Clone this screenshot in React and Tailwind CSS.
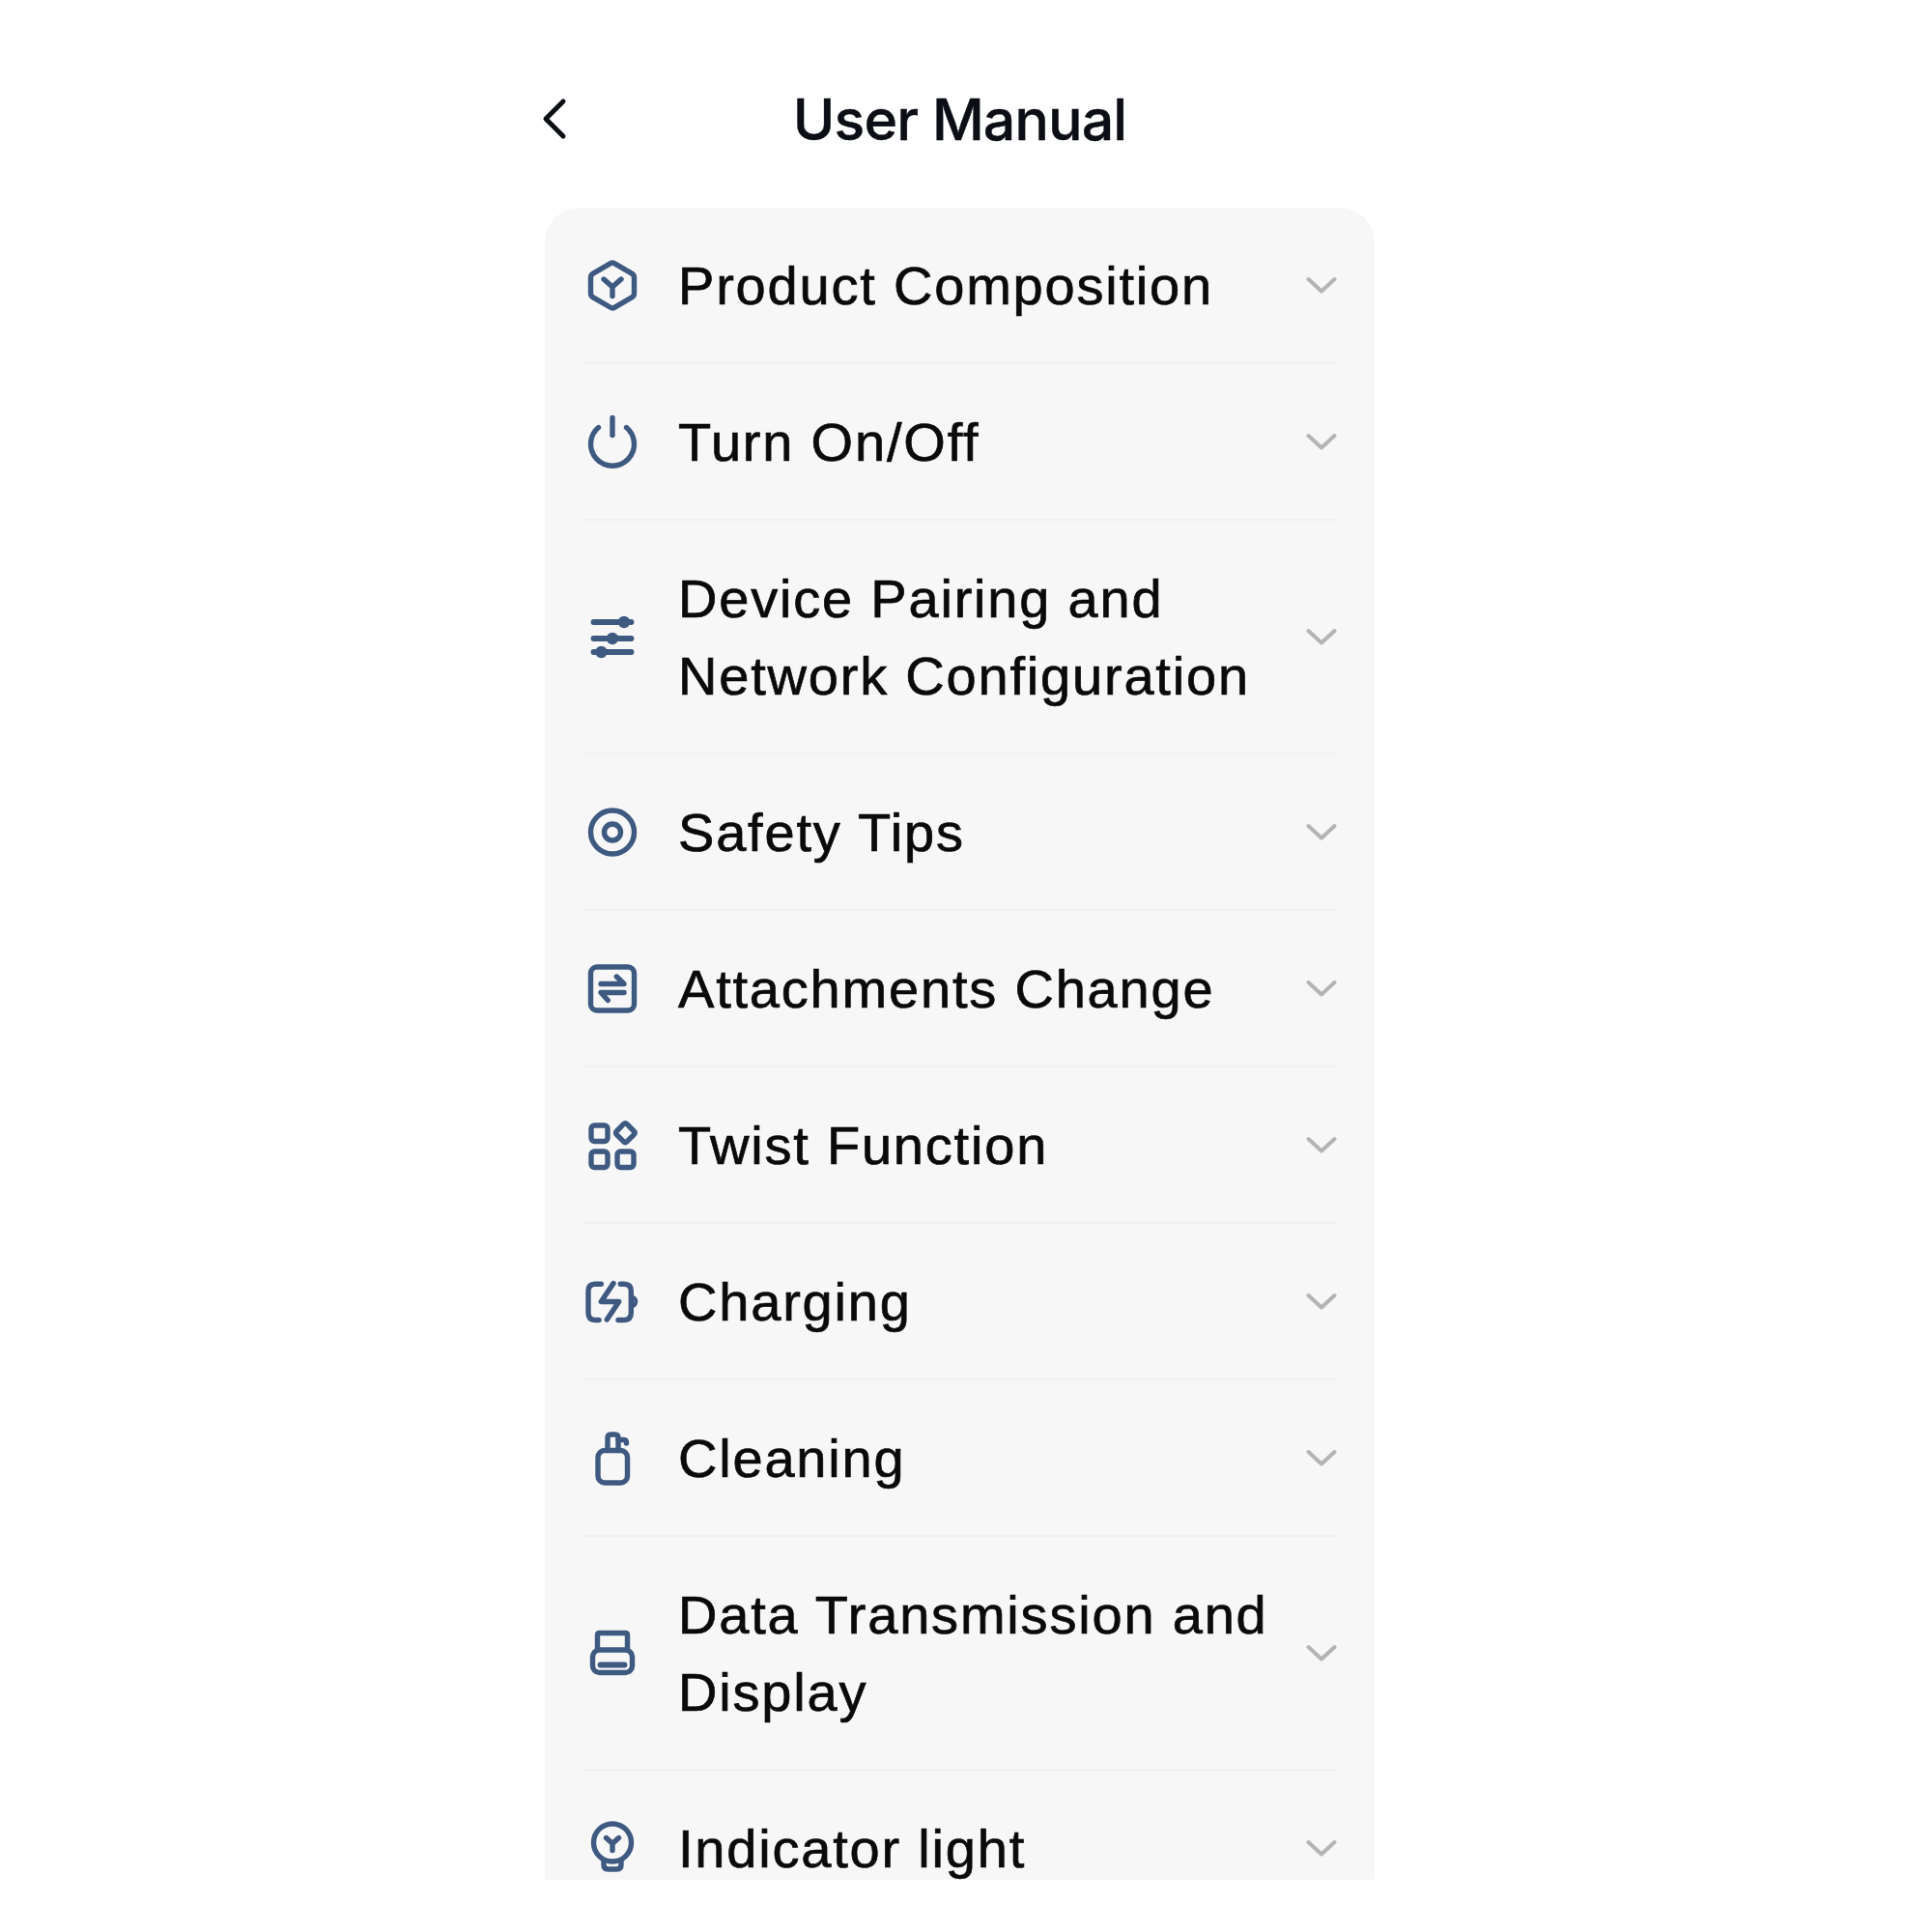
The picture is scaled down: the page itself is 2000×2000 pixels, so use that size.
const Icon = ({ children }) => (
  <svg
    className="w-[62px] h-[62px] shrink-0 text-[#3e5a81]"
    viewBox="-31 -30.5 62 62"
    fill="none"
    stroke="currentColor"
    strokeWidth="5.4"
    strokeLinecap="round"
    strokeLinejoin="round"
  >
    {children}
  </svg>
);

const icons = {
  hex: (
    <>
      <path d="M2 -22.8 L20 -12.4 Q22.5 -11 22.5 -8 V8 Q22.5 11 20 12.4 L2 22.8 Q0 24 -2 22.8 L-20 12.4 Q-22.5 11 -22.5 8 V-8 Q-22.5 -11 -20 -12.4 L-2 -22.8 Q0 -24 2 -22.8 Z" />
      <path d="M-9 -6.5 L0 1.5 L9 -6.5 M0 1.5 V11" />
    </>
  ),
  power: (
    <>
      <path d="M14.5 -15 A22.5 22.5 0 1 1 -14.5 -15" />
      <path d="M0 -25 V-7" />
    </>
  ),
  sliders: (
    <>
      <path d="M-19.5 -15.5 H19.5 M-19.5 1.5 H19.5 M-19.5 15.5 H19.5" strokeWidth="5.8" />
      <circle cx="12" cy="-15.5" r="6.2" fill="currentColor" stroke="none" />
      <circle cx="0" cy="1.5" r="6.2" fill="currentColor" stroke="none" />
      <circle cx="-11.5" cy="15.5" r="6.2" fill="currentColor" stroke="none" />
    </>
  ),
  target: (
    <>
      <circle cx="0" cy="0" r="22.5" />
      <circle cx="0" cy="0" r="8.5" />
    </>
  ),
  swap: (
    <>
      <rect x="-22.5" y="-22.5" width="45" height="45" rx="6.5" />
      <path d="M-12 -5 H12 L4.3 -12.5 M12 4 H-12 L-4.7 12" />
    </>
  ),
  apps: (
    <>
      <rect x="-22" y="-20.5" width="17" height="16.5" rx="3.5" />
      <rect x="-22" y="6.5" width="17" height="16.5" rx="3.5" />
      <rect x="5" y="6.5" width="17" height="16.5" rx="3.5" />
      <path d="M11.5 -21.8 Q13.3 -23.5 15.1 -21.8 L22.2 -14.5 Q24 -12.7 22.2 -10.9 L15.1 -3.8 Q13.3 -2 11.5 -3.8 L4.4 -10.9 Q2.6 -12.7 4.4 -14.5 Z" />
    </>
  ),
  charge: (
    <>
      <path d="M-11.7 -18.3 H-18 Q-25 -18.3 -25 -11 V11.5 Q-25 19 -18 19 H-14" />
      <path d="M1 -19 L-11.7 0 H6.7 L-5.7 18.5" />
      <path d="M8.3 -18.3 H12 Q19.3 -18.3 19.3 -11 V11.5 Q19.3 19 12 19 H6" />
      <path d="M19.3 -5 A5 5 0 0 1 19.3 5 Z" strokeWidth="4" />
    </>
  ),
  bottle: (
    <>
      <rect x="-15" y="-8" width="30.5" height="33.5" rx="7" />
      <path d="M-5 -8 V-21 Q-5 -24.5 -1.5 -24.5 H2.5 Q6 -24.5 6 -21 V-8" />
      <path d="M6 -19 H12 Q14.5 -19 14.5 -15.5" />
    </>
  ),
  printer: (
    <>
      <rect x="-20.5" y="-3.5" width="41" height="23.5" rx="7" />
      <path d="M-15.5 -3.5 V-19 Q-15.5 -21 -13.5 -21 H13.5 Q15.5 -21 15.5 -19 V-3.5" />
      <path d="M-12.5 12 H12.5" strokeWidth="5.8" />
    </>
  ),
  bulb: (
    <>
      <circle cx="0" cy="-6" r="19.5" />
      <path d="M-9 13 V17 Q-9 21.5 -4.5 21.5 H4.5 Q9 21.5 9 17 V13" />
      <path d="M-6.5 -11 L0 -5 L6.5 -11 M0 -5 V2" />
    </>
  ),
};

const items = [
  { icon: "hex", label: "Product Composition" },
  { icon: "power", label: "Turn On/Off" },
  { icon: "sliders", label: "Device Pairing and Network Configuration" },
  { icon: "target", label: "Safety Tips" },
  { icon: "swap", label: "Attachments Change" },
  { icon: "apps", label: "Twist Function" },
  { icon: "charge", label: "Charging" },
  { icon: "bottle", label: "Cleaning" },
  { icon: "printer", label: "Data Transmission and Display" },
  { icon: "bulb", label: "Indicator light" },
];

const Chevron = () => (
  <svg className="w-8 h-8 shrink-0 text-[#b4b4b4]" viewBox="-16 -15.5 32 32" fill="none" stroke="currentColor" strokeWidth="4" strokeLinecap="round" strokeLinejoin="round">
    <path d="M-13.5 -6.5 L0 6 L13.5 -6.5" />
  </svg>
);

export default function App() {
  return (
    <div className="w-[2000px] h-[2000px] bg-white pl-[564px] font-['Liberation_Sans',Arial,sans-serif] text-[#0a0a0a]">
      <div className="w-[859px]">
        <header className="relative h-[215px] flex items-start justify-center pt-[88px]">
          <svg className="absolute left-[-4px] top-[98px] w-[32px] h-[50px]" viewBox="0 0 32 50" fill="none" stroke="#0c0f14" strokeWidth="5" strokeLinecap="round" strokeLinejoin="round">
            <path d="M23 7 L5 25 L23 43" />
          </svg>
          <h1 className="text-[59px] leading-[72px] font-medium font-['Inter',sans-serif] tracking-[-0.9px] [-webkit-text-stroke:0.4px_#0b0e14] text-[#0b0e14]">User Manual</h1>
        </header>
        <div className="h-[1731px] overflow-hidden rounded-t-[36px] bg-[#f7f7f7] px-[39px]">
          {items.map((it) => (
            <div
              key={it.label}
              className="flex items-center border-b-2 border-[#f1f1f1] pt-[41px] pb-[39px] first:pb-[39px]"
            >
              <Icon>{icons[it.icon]}</Icon>
              <span className="flex-1 ml-[37px] mr-[8px] text-[56px] leading-[80px] tracking-[1.8px] [-webkit-text-stroke:0.7px_#0a0a0a]">{it.label}</span>
              <Chevron />
            </div>
          ))}
        </div>
      </div>
    </div>
  );
}
